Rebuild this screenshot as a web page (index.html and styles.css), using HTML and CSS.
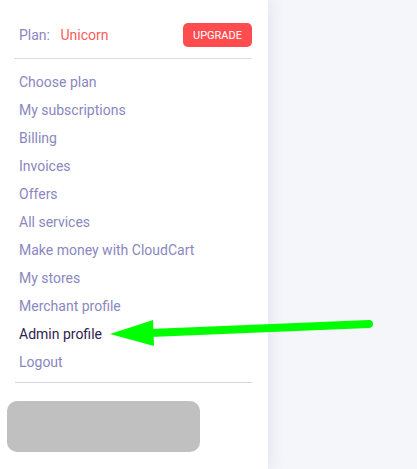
FILE: index.html
```html
<!DOCTYPE html>
<html lang="en">
<head>
  <meta charset="UTF-8" />
  <title>Account menu</title>
  <link rel="stylesheet" href="styles.css">
</head>
<body>
  <div class="layout">
    <aside class="panel">
      <div class="plan-row">
        <div class="plan">Plan: <span class="plan-name">Unicorn</span></div>
        <button class="upgrade">UPGRADE</button>
      </div>
      <ul class="menu">
        <li><a href="#">Choose plan</a></li>
        <li><a href="#">My subscriptions</a></li>
        <li><a href="#">Billing</a></li>
        <li><a href="#">Invoices</a></li>
        <li><a href="#">Offers</a></li>
        <li><a href="#">All services</a></li>
        <li><a href="#">Make money with CloudCart</a></li>
        <li><a href="#">My stores</a></li>
        <li><a href="#">Merchant profile</a></li>
        <li><a href="#" class="active">Admin profile</a></li>
        <li><a href="#">Logout</a></li>
      </ul>
      <div class="placeholder"></div>
    </aside>
    <main class="content"></main>
  </div>

  <!-- annotation arrow drawn over the page -->
  <svg class="arrow" width="417" height="469" viewBox="0 0 417 469">
    <line x1="369" y1="324" x2="150" y2="333" stroke="#00ff00" stroke-width="8" stroke-linecap="round"/>
    <polygon points="110,334 153,320 154,346" fill="#00ff00"/>
  </svg>
</body>
</html>
```

FILE: styles.css
```css
* {
  box-sizing: border-box;
  margin: 0;
  padding: 0;
}
body {
  font-family: Roboto, "Noto Sans", sans-serif;
  font-size: 14px;
  background-color: #f5f6fa;
  color: #8a87c0;
  width: 417px;
  height: 469px;
  overflow: hidden;
}
.layout {
  display: flex;
  height: 469px;
}
.panel {
  width: 268px;
  background: #fff;
  box-shadow: 4px 0 12px rgba(120, 125, 180, 0.12);
  position: relative;
  z-index: 1;
}
.content {
  flex: 1;
}
.plan-row {
  display: flex;
  justify-content: space-between;
  align-items: center;
  margin: 0 16px 0 14px;
  padding: 23px 0 11px 5px;
  border-bottom: 1px solid #dcdce2;
}
.plan {
  font-size: 14px;
  color: #8a87c0;
}
.plan-name {
  color: #ff5a5a;
  margin-left: 7px;
}
.upgrade {
  background-color: #ff4d4f;
  color: #fff;
  border: none;
  border-radius: 5px;
  font-family: Roboto, sans-serif;
  font-size: 11px;
  width: 69px;
  height: 24px;
  cursor: pointer;
}
.menu {
  list-style: none;
  margin: 0 16px 0 15px;
  padding: 9px 0 6px 4px;
  border-bottom: 1px solid #d4d4dc;
}
.menu li {
  height: 28px;
  line-height: 28px;
}
.menu a {
  color: #8a87c0;
  text-decoration: none;
}
.menu a.active {
  color: #2e2350;
}
.placeholder {
  margin: 18px 0 0 7px;
  width: 193px;
  height: 51px;
  background: #c0c0c0;
  border-radius: 10px;
}
.arrow {
  position: absolute;
  left: 0;
  top: 0;
  z-index: 2;
  pointer-events: none;
}
```
